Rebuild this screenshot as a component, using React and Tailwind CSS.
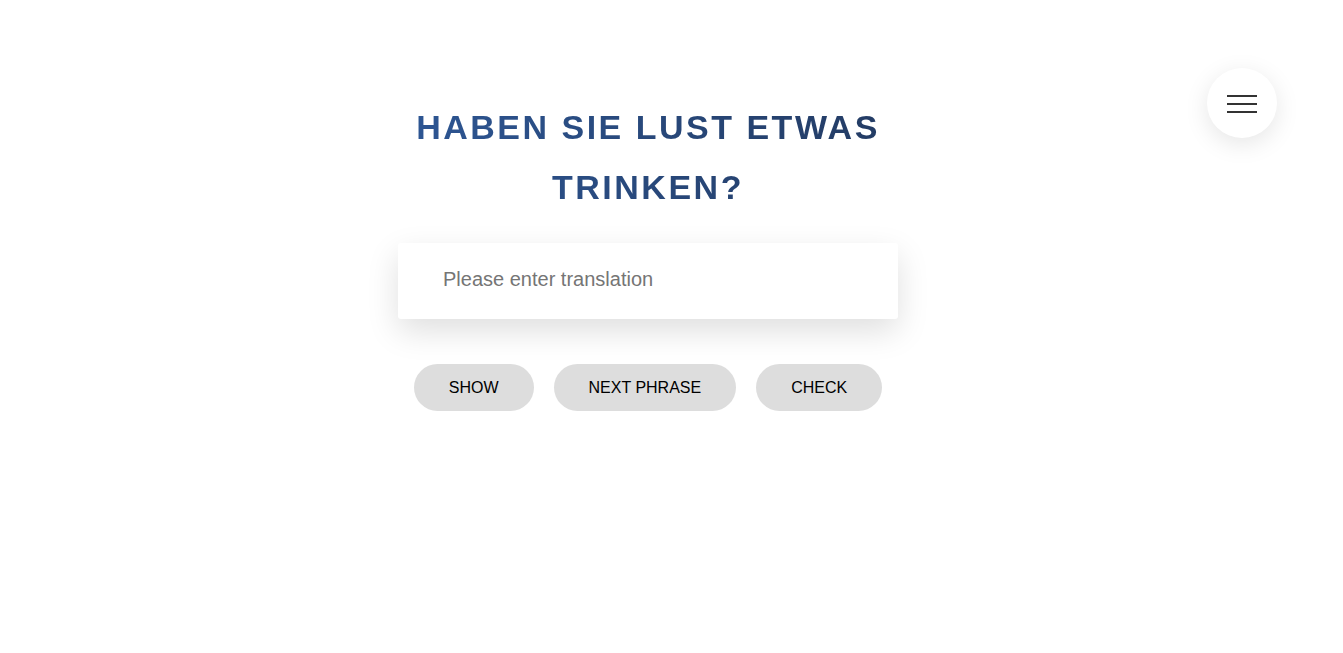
import React from 'react'

/* ─────────────────────────────────────────────
   MENU BUTTON
───────────────────────────────────────────── */
const MenuButton = () => (
  <button
    aria-label="Menu"
    className="absolute top-[68px] right-[66px] w-[70px] h-[70px] rounded-full bg-white shadow-[0_6px_24px_rgba(0,0,0,0.10)] flex flex-col items-center justify-center gap-[6px] pt-[2px]"
  >
    <span className="block w-[30px] h-[2px] bg-[#333]" />
    <span className="block w-[30px] h-[2px] bg-[#333]" />
    <span className="block w-[30px] h-[2px] bg-[#333]" />
  </button>
)

/* ─────────────────────────────────────────────
   PAGE
───────────────────────────────────────────── */
const buttons = ['SHOW', 'NEXT PHRASE', 'CHECK']

const App = () => {
  return (
    <div className="relative min-h-[653px] w-full bg-white font-['Liberation_Sans',Arial,sans-serif]">
      <MenuButton />

      <div className="w-[1296px] pt-[97px] flex flex-col items-center">
        {/* Phrase */}
        <h1 className="w-[500px] text-center text-[34px] leading-[60px] font-bold tracking-[2.5px] bg-gradient-to-r from-[#2d5694] to-[#233b63] bg-clip-text text-transparent">
          HABEN SIE LUST ETWAS TRINKEN?
        </h1>

        {/* Input */}
        <input
          type="text"
          placeholder="Please enter translation"
          className="mt-[26px] w-[500px] h-[76px] rounded-[3px] bg-white pl-[45px] pr-4 pb-1 text-[20px] text-[#333] placeholder:text-[#757575] outline-none shadow-[0_12px_32px_rgba(0,0,0,0.13)] border-l-0"
        />

        {/* Actions */}
        <div className="mt-[45px] flex gap-[20px]">
          {buttons.map((b) => (
            <button
              key={b}
              className="h-[47px] px-[35px] rounded-full bg-[#dddddd] text-[16px] text-black"
            >
              {b}
            </button>
          ))}
        </div>
      </div>
    </div>
  )
}

export default App
